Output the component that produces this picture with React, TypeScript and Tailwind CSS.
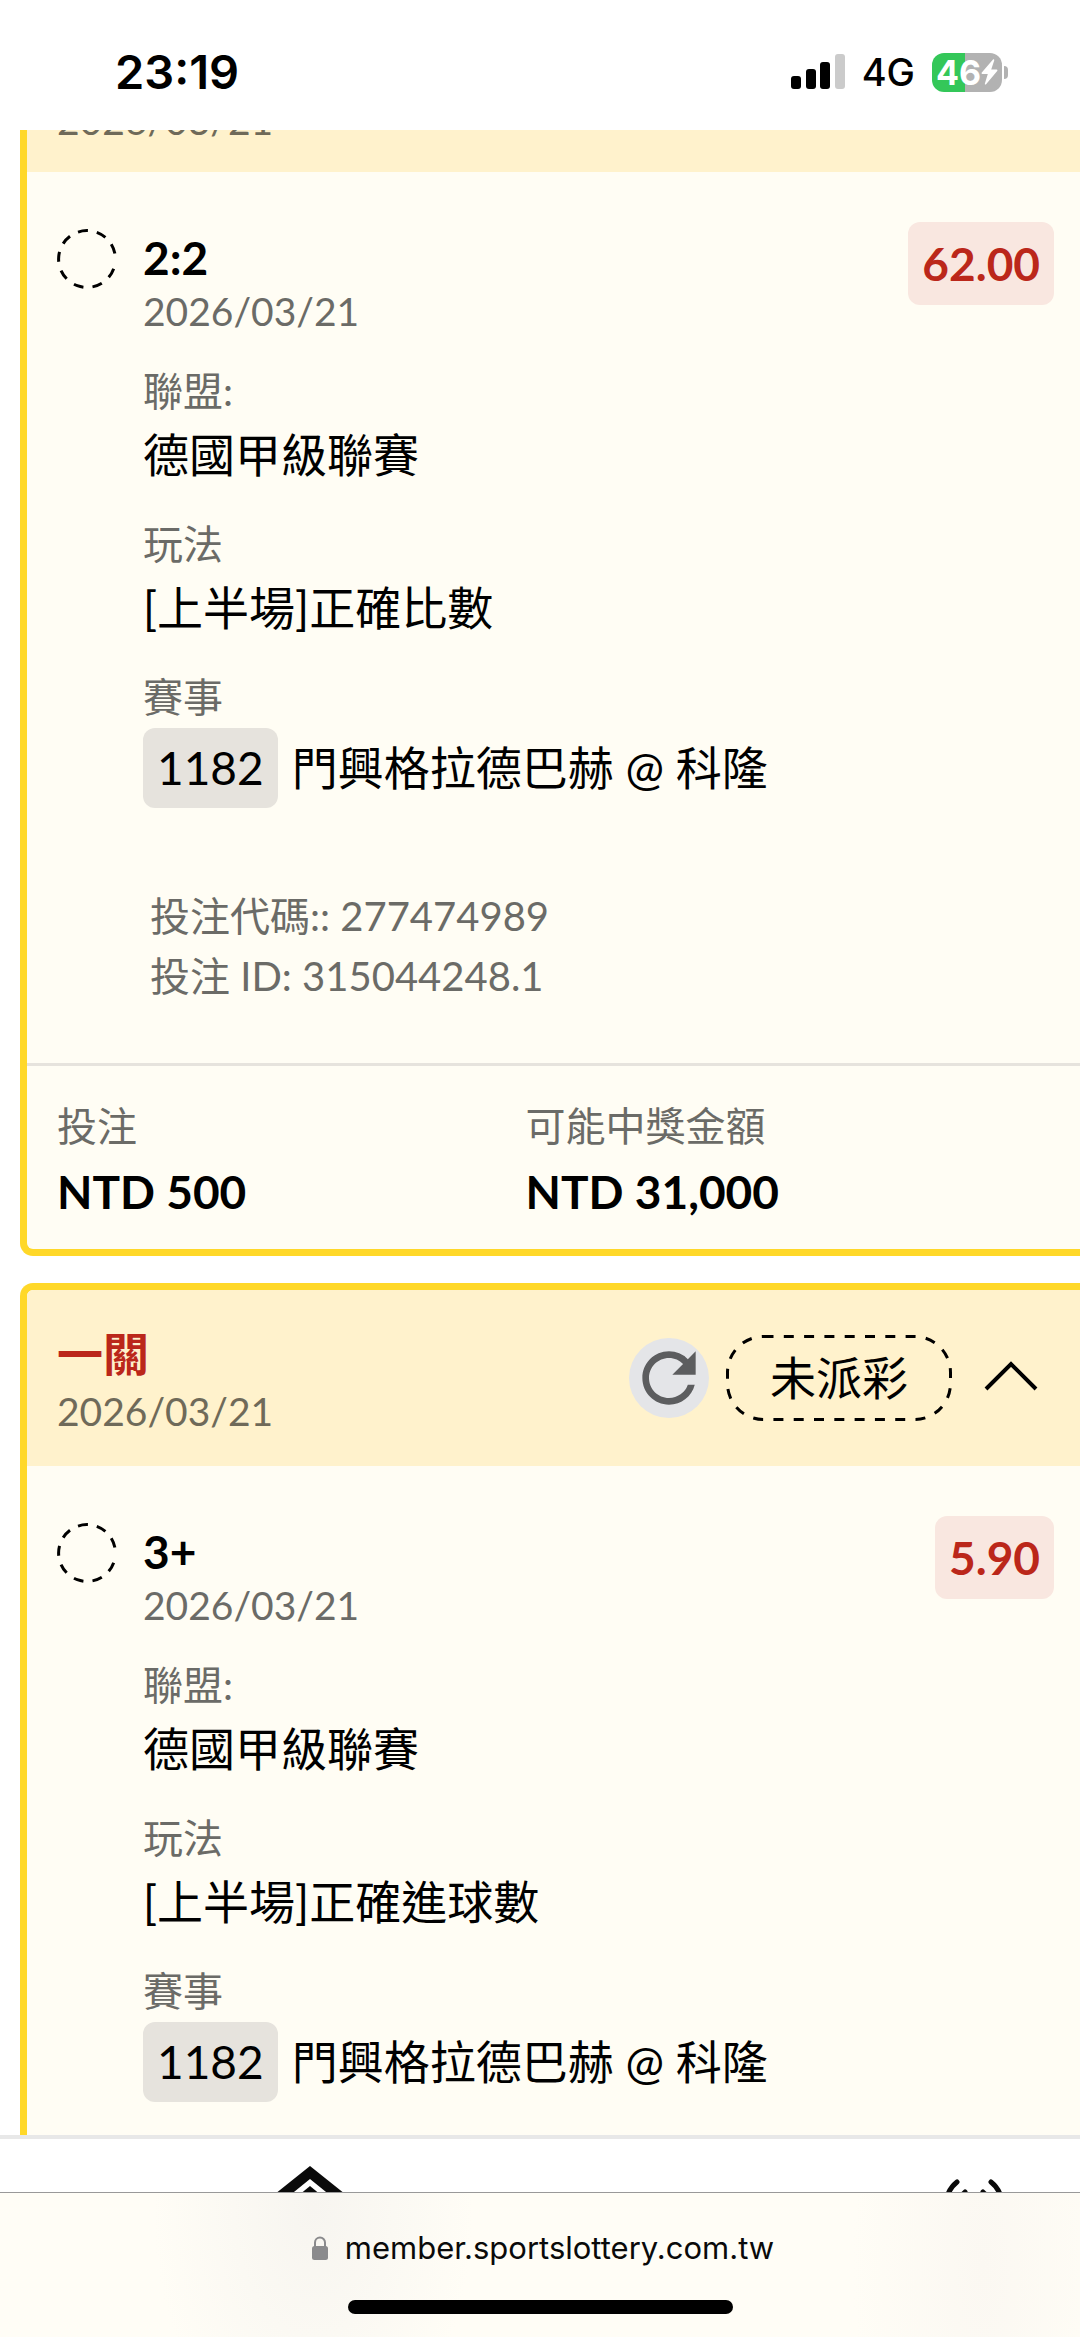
import React from 'react';
import { MdRefresh } from 'react-icons/md';

type Bet = {
  stage?: string;
  date: string;
  pick: string;
  odds: string;
  league: string;
  market: string;
  matchNo: string;
  match: string;
  betCode?: string;
  betId?: string;
  stake?: string;
  payout?: string;
};

const bets: Bet[] = [
  {
    date: '2026/03/21',
    pick: '2:2',
    odds: '62.00',
    league: '德國甲級聯賽',
    market: '[上半場]正確比數',
    matchNo: '1182',
    match: '門興格拉德巴赫 @ 科隆',
    betCode: '277474989',
    betId: '315044248.1',
    stake: 'NTD 500',
    payout: 'NTD 31,000',
  },
  {
    stage: '一關',
    date: '2026/03/21',
    pick: '3+',
    odds: '5.90',
    league: '德國甲級聯賽',
    market: '[上半場]正確進球數',
    matchNo: '1182',
    match: '門興格拉德巴赫 @ 科隆',
  },
];

function StatusBar() {
  return (
    <header className="flex h-[130px] shrink-0 items-start justify-between bg-white pt-[44px] pr-[72px] pl-[115px] font-['Inter',sans-serif] text-black">
      <span className="text-[47px] leading-[56px] font-semibold">23:19</span>
      <div className="flex h-[56px] items-center">
        <svg className="h-[36px] w-[54px]" viewBox="0 0 54 36" aria-hidden="true">
          <rect x="0" y="22" width="10" height="13" rx="3" />
          <rect x="15" y="15" width="10" height="20" rx="3" />
          <rect x="29" y="8" width="10" height="27" rx="3" />
          <rect x="44" y="0" width="10" height="35" rx="3" fill="#cbcbcb" />
        </svg>
        <span className="ml-[17px] text-[38px] leading-[56px] font-medium">4G</span>
        <div className="ml-[17px] flex items-center gap-[2px]">
          <div className="flex h-[39px] w-[70px] items-center justify-center rounded-[12px] bg-linear-to-r from-[#34c759] from-47% to-[#b2b2b2] to-47% text-white">
            <span className="text-[34px] leading-[39px] font-bold">46</span>
            <svg className="h-[26px] w-[17px]" viewBox="0 0 17 26" fill="currentColor" aria-hidden="true">
              <path d="M12 0.5 0.8 13.6c-.5.7-.2 1.4.6 1.4h5.4L3.9 24.6c-.3 1 .5 1.3 1.2.6L16.2 12c.5-.7.2-1.400-.6-1.400h-5.400L13.200 1.400c.3-1-.5-1.500-1.200-.9z" />
            </svg>
          </div>
          <div className="h-[13px] w-[4px] rounded-r-full bg-[#b2b2b2]" />
        </div>
      </div>
    </header>
  );
}

function PendingCircle() {
  return (
    <svg className="mt-[7px] h-[60px] w-[60px] shrink-0" viewBox="0 0 60 60" fill="none" aria-hidden="true">
      <circle
        cx="30"
        cy="30"
        r="28.4"
        stroke="black"
        strokeWidth="3"
        transform="rotate(20 30 30)"
        strokeDasharray="10 9.1 10 9.1 10 9.1 10 9.1 10 9.1 10 9.1 10 9.1 10 9.1 10 30"
      />
    </svg>
  );
}

function CardHeader({ stage, date }: { stage: string; date: string }) {
  return (
    <div className="flex h-[176px] items-start justify-between bg-[#fff2cc] pr-[42px] pl-[30px]">
      <div className="pt-[36px]">
        <h2 className="text-[46px] leading-[56px] font-bold text-[#bb271a]">{stage}</h2>
        <p className="text-[39px] leading-[58px] text-[#6f6a59]">{date}</p>
      </div>
      <div className="flex items-center pt-[45px]">
        <button
          type="button"
          aria-label="重新整理"
          className="flex h-[80px] w-[80px] items-center justify-center rounded-full bg-[#e4e5e8] text-[#5c5d5f]"
        >
          <MdRefresh size={80} />
        </button>
        <div className="relative ml-[17px] flex h-[86px] w-[226px] items-center justify-center">
          <svg className="absolute inset-0 h-full w-full" viewBox="0 0 226 86" fill="none" aria-hidden="true">
            <rect x="1.5" y="1.5" width="223" height="83" rx="36" stroke="black" strokeWidth="3" strokeDasharray="10 10.3" />
          </svg>
          <span className="text-[46px] leading-[56px]">未派彩</span>
        </div>
        <button type="button" aria-label="收合" className="ml-[32px] pb-[4px]">
          <svg className="h-[30px] w-[54px]" viewBox="0 0 54 30" fill="none" stroke="black" strokeWidth="4" aria-hidden="true">
            <path d="M2 28 27 3l25 25" />
          </svg>
        </button>
      </div>
    </div>
  );
}

// header of a card that is mostly scrolled under the status bar
function ScrolledHeader({ date }: { date: string }) {
  return (
    <div className="h-[42px] overflow-hidden bg-[#fff2cc] pl-[30px]">
      <p className="-mt-[39px] text-[39px] leading-[58px] text-[#6f6a59]">{date}</p>
    </div>
  );
}

function BetCard({ bet }: { bet: Bet }) {
  return (
    <article
      className={`overflow-hidden border-l-[7px] border-[#ffd829] bg-[#fffdf4] ${
        bet.stage ? 'rounded-tl-[13px] border-t-[7px]' : 'rounded-bl-[13px] border-b-[7px]'
      }`}
    >
      {bet.stage ? <CardHeader stage={bet.stage} date={bet.date} /> : <ScrolledHeader date={bet.date} />}

      <div className="flex items-start pt-[50px] pr-[26px] pb-[57px] pl-[30px]">
        <PendingCircle />
        <div className="ml-[26px] flex-1">
          <div className="h-[141px] pt-[8px]">
            <h3 className="text-[46px] leading-[56px] font-bold">{bet.pick}</h3>
            <p className="text-[39px] leading-[50px] text-[#6b6b67]">{bet.date}</p>
          </div>
          <dl>
            <dt className="text-[40px] leading-[56px] text-[#6b6b67]">聯盟:</dt>
            <dd className="mb-[25px] text-[46px] leading-[72px]">{bet.league}</dd>
            <dt className="text-[40px] leading-[56px] text-[#6b6b67]">玩法</dt>
            <dd className="mb-[25px] text-[46px] leading-[72px]">{bet.market}</dd>
            <dt className="text-[40px] leading-[56px] text-[#6b6b67]">賽事</dt>
            <dd className="mt-[3px] flex items-center gap-[14px] text-[46px] leading-[80px]">
              <span className="rounded-[12px] bg-[#e6e3dd] px-[14px]">{bet.matchNo}</span>
              <span>{bet.match}</span>
            </dd>
          </dl>
          {bet.betCode && (
            <div className="mt-[78px] pl-[7px] text-[40px] leading-[60px] text-[#6b6b67]">
              <p>投注代碼:: {bet.betCode}</p>
              <p>投注 ID: {bet.betId}</p>
            </div>
          )}
        </div>
        <span className="rounded-[12px] bg-[#f9e7e0] px-[14px] text-[46px] leading-[83px] font-bold text-[#bb271a]">
          {bet.odds}
        </span>
      </div>

      {bet.stake && (
        <dl className="grid grid-cols-[47%_1fr] border-t-[3px] border-[#e6e3dd] pt-[32px] pr-[26px] pb-[27px] pl-[30px]">
          <div>
            <dt className="text-[40px] leading-[56px] text-[#6b6b67]">投注</dt>
            <dd className="mt-[8px] text-[46px] leading-[60px] font-bold">{bet.stake}</dd>
          </div>
          <div>
            <dt className="text-[40px] leading-[56px] text-[#6b6b67]">可能中獎金額</dt>
            <dd className="mt-[8px] text-[46px] leading-[60px] font-bold">{bet.payout}</dd>
          </div>
        </dl>
      )}
    </article>
  );
}

function TabBar() {
  return (
    <nav className="flex h-[57px] shrink-0 items-start justify-between overflow-hidden border-t-[4px] border-[#e8e8e8] bg-white pr-[74px] pl-[260px]">
      <a href="#home" aria-label="首頁" className="pt-[27px]">
        <svg className="h-[80px] w-[100px]" viewBox="0 0 100 80" aria-hidden="true">
          <path d="M50 0 100 40v40H0V40z" fill="#0a0a0a" />
          <path d="M50 13 92 47v33H8V47z" fill="white" />
          <path d="M50 20 84 48v32H16V48z" fill="#0a0a0a" />
        </svg>
      </a>
      <a href="#live" aria-label="現場" className="pt-[40px]">
        <svg className="h-[60px] w-[68px]" viewBox="0 0 68 60" fill="none" stroke="#0a0a0a" strokeWidth="5" strokeLinecap="round" aria-hidden="true">
          <path d="M19 3C4 15 4 41 19 55M53 3c15 12 15 38 0 52M27 13c-9 8-9 24 0 32M45 13c9 8 9 24 0 32" />
        </svg>
      </a>
    </nav>
  );
}

function BrowserBar() {
  return (
    <footer className="flex h-[145px] shrink-0 flex-col items-center border-t border-[#999] bg-[#fffdf6] bg-[radial-gradient(ellipse_160px_260px_at_29%_10%,#f7f5f0,transparent),radial-gradient(ellipse_130px_400px_at_91%_50%,#fbf8f2,transparent)] font-['Inter',sans-serif] text-[#0a0a0a]">
      <div className="mt-[35px] flex h-[40px] items-center gap-[17px] pl-[6px]">
        <svg className="h-[24px] w-[16px]" viewBox="0 0 16 24" aria-hidden="true">
          <path d="M3 11V6.500a5 5 0 0 1 10 0V11" fill="none" stroke="#8a8a8c" strokeWidth="2" />
          <rect x="0" y="10" width="16" height="14" rx="2.500" fill="#8a8a8c" />
        </svg>
        <span className="text-[31px] leading-[40px]">member.sportslottery.com.tw</span>
      </div>
      <div className="mt-[32px] h-[14px] w-[385px] rounded-full bg-black" />
    </footer>
  );
}

function App() {
  return (
    <div className="flex h-screen flex-col bg-white font-['Lato','Noto_Sans_CJK_TC',sans-serif] text-black">
      <StatusBar />
      <main className="flex min-h-0 flex-1 flex-col overflow-hidden pl-[20px]">
        <div className="flex flex-col gap-[27px]">
          {bets.map((bet) => (
            <BetCard key={bet.pick} bet={bet} />
          ))}
        </div>
      </main>
      <TabBar />
      <BrowserBar />
    </div>
  );
}

export default App;
